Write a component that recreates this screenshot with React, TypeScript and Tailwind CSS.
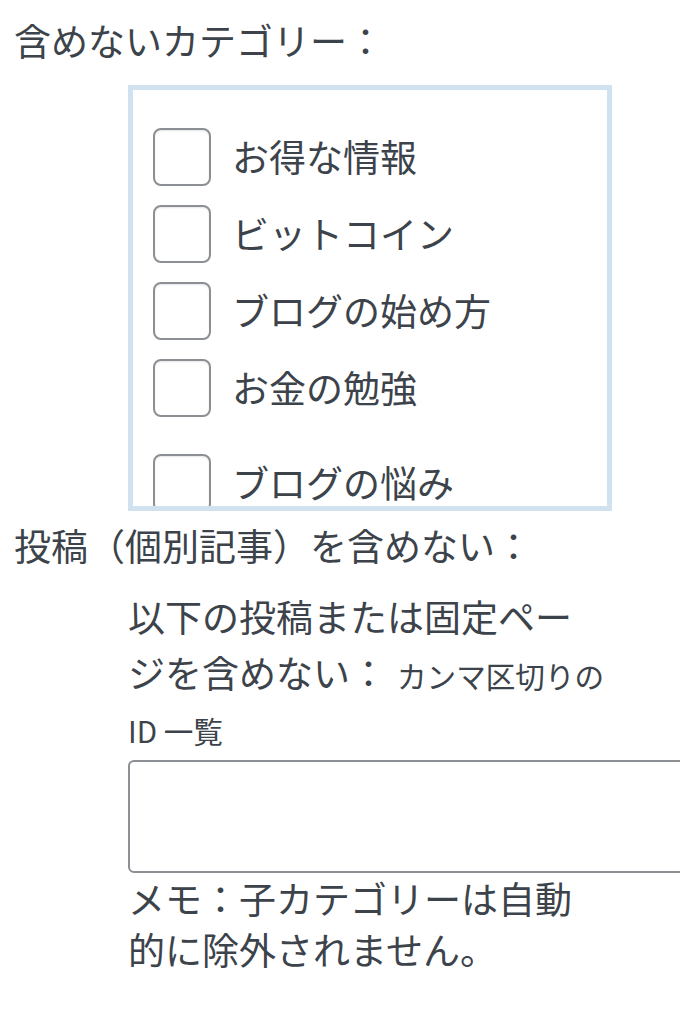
const CATEGORIES = ['お得な情報', 'ビットコイン', 'ブログの始め方', 'お金の勉強'];

function CategoryRow({ label, className = '' }: { label: string; className?: string }) {
  return (
    <label className={`flex items-center gap-[21px] h-[58px] shrink-0 ${className}`}>
      <input type="checkbox" className="appearance-none w-[58px] h-[58px] shrink-0 rounded-[8px] border-2 border-[#8c8f94] bg-white shadow-[inset_0_1px_2px_rgba(0,0,0,0.1)]" />
      <span>{label}</span>
    </label>
  );
}

export default function App() {
  return (
    <main
      className="min-h-screen w-full bg-white pt-[13px] text-[37px] leading-[1.5] text-[#3c434a]"
      style={{ fontFamily: '"Noto Sans CJK JP", "Noto Sans", sans-serif' }}
    >
      <p className="pl-[14px]">含めないカテゴリー：</p>

      <div className="ml-[128px] mt-[16px] w-[484px] h-[426px] border-[5px] border-[#d0e2f0] overflow-hidden">
        <div className="flex flex-col gap-[19px] pt-[38px] pl-[20px]">
          {CATEGORIES.map((c) => (
            <CategoryRow key={c} label={c} />
          ))}
          <CategoryRow label="ブログの悩み" className="mt-[18px]" />
        </div>
      </div>

      <p className="pl-[14px] mt-[7px]">投稿（個別記事）を含めない：</p>

      <div className="ml-[128px] mt-[16px] w-[480px]">
        <p>
          以下の投稿または固定ページを含めない：
          <span className="text-[0.8em] ml-[10px]">カンマ区切りの ID 一覧</span>
        </p>
        <textarea className="block mt-[4px] w-[580px] h-[113px] rounded-[6px] border-2 border-[#8c8f94] bg-white resize-none" />
        <p className="leading-[1.4]">メモ：子カテゴリーは自動的に除外されません。</p>
      </div>
    </main>
  );
}
